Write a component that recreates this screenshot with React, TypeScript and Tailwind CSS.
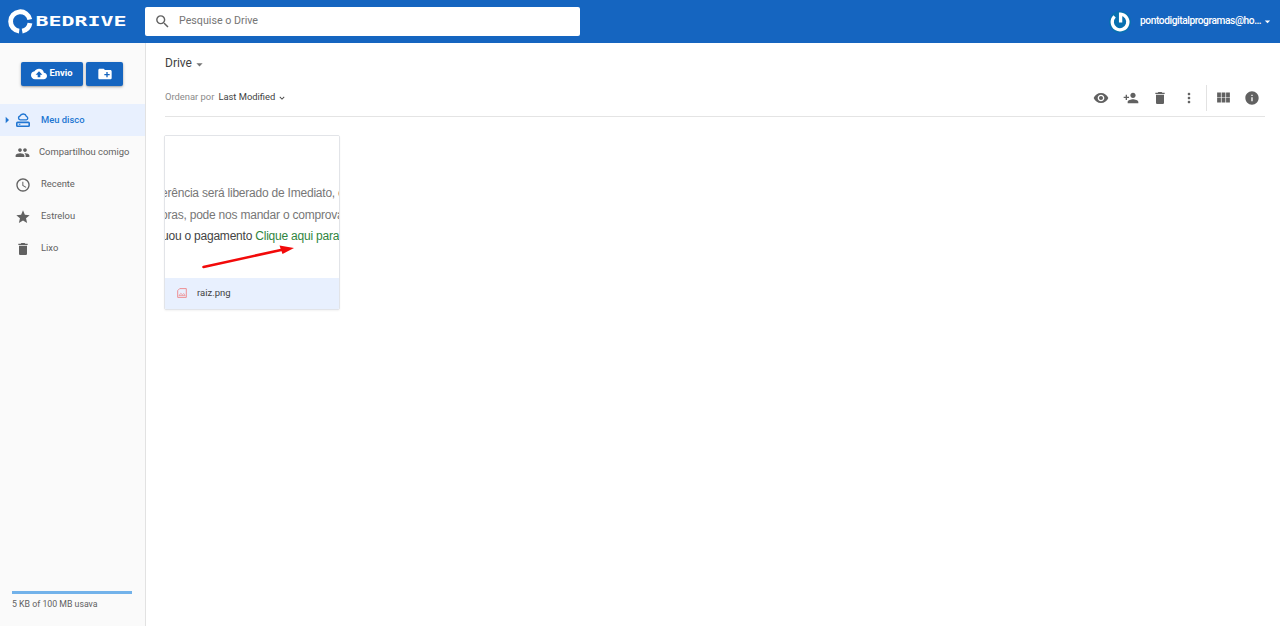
import React from "react";
import {
  MdAccessTime,
  MdArrowDropDown,
  MdArrowRight,
  MdBackup,
  MdCreateNewFolder,
  MdDelete,
  MdInfo,
  MdKeyboardArrowDown,
  MdMoreVert,
  MdPeople,
  MdPersonAdd,
  MdSearch,
  MdStar,
  MdViewModule,
  MdVisibility,
} from "react-icons/md";

function Logo() {
  return (
    <svg width="120" height="28" viewBox="0 0 120 28" className="ml-[7px] shrink-0">
      <g fill="none" stroke="#fff" strokeWidth="4.8">
        <path d="M22.8 11.4A9.7 9.7 0 1 0 12.2 23.1" />
        <path d="M15.2 23.1A9.7 9.7 0 0 0 23 15.2" />
      </g>
      <g transform="translate(28.6 18.2) scale(1 .88)">
        <text
          fill="#fff"
          fontSize="16"
          fontWeight="700"
          fontFamily="'DejaVu Sans Mono', monospace"
          textLength="91"
          lengthAdjust="spacingAndGlyphs"
        >
          BEDRIVE
        </text>
      </g>
    </svg>
  );
}

function Avatar() {
  return (
    <svg width="22" height="22" viewBox="0 0 22 22">
      <circle cx="11" cy="11" r="11" fill="#0870b0" />
      <path
        d="M5.6 5.4A7.8 7.8 0 1 0 11.6 3.2V11.6"
        fill="none"
        stroke="#fff"
        strokeWidth="3.3"
      />
    </svg>
  );
}

function DriveIcon() {
  return (
    <svg width="14" height="14" viewBox="0 0 14 14" fill="none" stroke="currentColor">
      <path
        d="M4.2 6.9H10.3A1.8 1.8 0 0 0 10.4 3.4A3.4 3.4 0 0 0 4 3A2 2 0 0 0 4.2 6.9Z"
        strokeWidth="1.4"
      />
      <rect x="0.8" y="9.4" width="12.4" height="3.8" rx="0.8" strokeWidth="1.6" />
      <path d="M2.8 11.3H4.4" strokeWidth="1" />
    </svg>
  );
}

function ImageFileIcon() {
  return (
    <svg width="10" height="10" viewBox="0 0 10 10" fill="none" stroke="#ee8587">
      <path d="M2.7 0.6H9.3V9.4H0.7V2.6Z" strokeWidth="0.9" />
      <path d="M2 7.6L3.8 5.3L5.4 6.8L6.7 5.5L8.1 7.6Z" strokeWidth="0.7" />
    </svg>
  );
}

const navItems = [
  { label: "Compartilhou comigo", icon: MdPeople, size: 15, gap: "gap-[9px]" },
  { label: "Recente", icon: MdAccessTime, size: 16, gap: "gap-[10px]" },
  { label: "Estrelou", icon: MdStar, size: 16, gap: "gap-[10px]" },
  { label: "Lixo", icon: MdDelete, size: 16, gap: "gap-[10px]" },
];

function Header() {
  return (
    <header className="flex h-[43px] shrink-0 items-center bg-[#1565c0]">
      <Logo />
      <div className="mb-px ml-[18px] flex h-[29px] w-[435px] items-center rounded-xs bg-white pl-[9px] text-[#757575]">
        <MdSearch size={17} className="text-[#616161]" />
        <span className="ml-2 pt-px text-[10.7px]">Pesquise o Drive</span>
      </div>
      <div className="ml-auto flex items-center text-white">
        <Avatar />
        <span className="mb-px ml-[9px] w-[121px] text-[10.2px] tracking-[-0.42px] font-medium whitespace-nowrap">
          pontodigitalprogramas@ho…
        </span>
        <MdArrowDropDown size={13} className="mr-1.5" />
      </div>
    </header>
  );
}

function Sidebar() {
  return (
    <aside className="flex w-[146px] shrink-0 flex-col border-r border-[#e2e2e2] bg-[#fafafa] text-[9.4px] text-[#616161]">
      <div className="mt-[19px] ml-[21px] flex gap-[3px]">
        <button className="flex h-6 w-[62px] items-center justify-center gap-0.5 rounded-xs bg-[#1565c0] font-medium text-white shadow-sm shadow-black/30">
          <MdBackup size={16} />
          <span className="mb-0.5 font-bold">Envio</span>
        </button>
        <button className="flex h-6 w-[37px] items-center justify-center rounded-xs bg-[#1565c0] text-white shadow-sm shadow-black/30">
          <MdCreateNewFolder size={16} />
        </button>
      </div>

      <nav className="mt-[18px]">
        <div className="flex h-8 items-center bg-[#e8f0fe] text-[#2176d2]">
          <MdArrowRight size={16} className="-ml-px" />
          <span className="ml-px">
            <DriveIcon />
          </span>
          <span className="ml-[11px] font-medium">Meu disco</span>
        </div>
        {navItems.map(({ label, icon: Icon, size, gap }) => (
          <div key={label} className={`flex h-8 items-center pt-px pl-[15px] ${gap}`}>
            <Icon size={size} />
            <span>{label}</span>
          </div>
        ))}
      </nav>

      <div className="mt-auto mb-4 ml-3 w-[120px]">
        <div className="h-[3px] bg-[#72b2ea]" />
        <div className="mt-1 text-[8.75px] leading-3">5 KB of 100 MB usava</div>
      </div>
    </aside>
  );
}

function FileCard() {
  return (
    <div className="mt-[18px] -ml-px flex h-[175px] w-[176px] flex-col overflow-hidden rounded-xs border border-[#e2e4e8] shadow-xs">
      <div className="relative h-[142px] overflow-hidden bg-white text-[12px] leading-[21.5px] tracking-[-0.22px] whitespace-nowrap text-[#777] [font-family:'Liberation_Sans',Arial,sans-serif]">
        <div className="mt-[47px] -ml-1">erência será liberado de Imediato, e</div>
        <div className="-ml-1">oras, pode nos mandar o comprova</div>
        <div className="-ml-[3px] text-[#444]">
          uou o pagamento <span className="text-[#2f8540]">Clique aqui para</span>
        </div>
        <svg className="absolute top-[108px] left-[36px]" width="94" height="26" viewBox="0 0 94 26">
          <path d="M2.5 23L80 6" stroke="#f20a0a" strokeWidth="2.6" strokeLinecap="round" />
          <path d="M93 4L78.5 1.5L81.5 10Z" fill="#f20a0a" />
        </svg>
      </div>
      <div className="flex flex-1 items-center bg-[#e8f0fe] pb-px pl-3 text-[9.5px] text-[#424242]">
        <ImageFileIcon />
        <span className="ml-2.5">raiz.png</span>
      </div>
    </div>
  );
}

function Toolbar() {
  return (
    <div className="flex h-11 items-center border-b border-[#e4e4e4] pt-1">
      <span className="pt-px text-[9.4px] text-[#8a8a8a]">Ordenar por</span>
      <span className="ml-1 pt-px text-[9.4px] text-[#424242]">Last Modified</span>
      <MdKeyboardArrowDown size={10} className="mt-0.5 ml-[2px] text-[#424242]" />
      <div className="mr-[5px] ml-auto flex items-center pt-0.5 text-[#616161]">
        <MdVisibility size={16} />
        <MdPersonAdd size={16} className="ml-3.5" />
        <MdDelete size={16} className="ml-[13px]" />
        <MdMoreVert size={16} className="ml-[13px]" />
        <span className="ml-[9px] h-[26px] w-px bg-[#e2e2e2]" />
        <MdViewModule size={17} className="ml-2" />
        <MdInfo size={16} className="ml-3" />
      </div>
    </div>
  );
}

export default function App() {
  return (
    <div className="flex h-[626px] w-[1280px] flex-col overflow-hidden bg-white [font-family:Roboto,sans-serif]">
      <Header />
      <div className="flex min-h-0 flex-1">
        <Sidebar />
        <main className="flex-1 pr-[15px] pl-[19px]">
          <div className="mt-[10px] flex h-5 items-center text-[12px] text-[#424242]">
            Drive
            <MdArrowDropDown size={15} className="mt-0.5 text-[#757575]" />
          </div>
          <Toolbar />
          <FileCard />
        </main>
      </div>
    </div>
  );
}
